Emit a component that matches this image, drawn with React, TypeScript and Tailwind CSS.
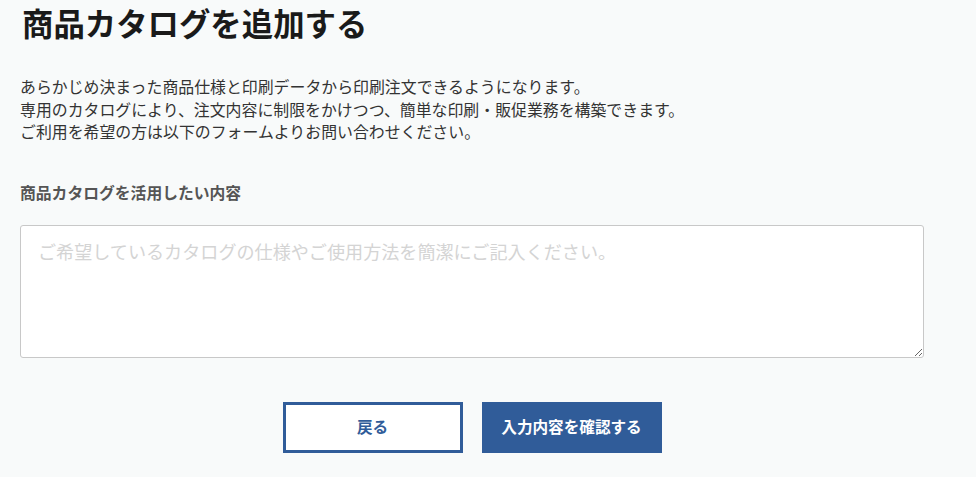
import React from "react";

const App: React.FC = () => {
  return (
    <div
      className="min-h-[477px] bg-[#f8fafa] text-[#333]"
      style={{ fontFamily: '"Noto Sans CJK JP", "Noto Sans", sans-serif' }}
    >
      <div className="w-[904px] ml-5 pt-[3px]">
        <h1 className="ml-[2px] text-[31.4px] leading-[40px] font-bold text-[#1a1a1a]">
          商品カタログを追加する
        </h1>

        <div className="mt-[33px] text-[15.9px] leading-[22.5px] text-[#333]">
          <p>あらかじめ決まった商品仕様と印刷データから印刷注文できるようになります。</p>
          <p>専用のカタログにより、注文内容に制限をかけつつ、簡単な印刷・販促業務を構築できます。</p>
          <p>ご利用を希望の方は以下のフォームよりお問い合わせください。</p>
        </div>

        <label className="block mt-[38px] text-[15.8px] leading-[22px] font-bold text-[#555]">
          商品カタログを活用したい内容
        </label>

        <textarea
          className="block mt-[21px] w-full h-[133px] bg-white border border-[#c8c8c8] rounded-[3px] px-[17px] py-[11px] text-[18.1px] leading-[28px] placeholder:text-[#d4d4d4] outline-none"
          placeholder="ご希望しているカタログの仕様やご使用方法を簡潔にご記入ください。"
        />

        <div className="flex justify-center gap-[19px] mt-[44px]">
          <button className="w-[180px] h-[51px] border-[3px] border-[#305c99] bg-white text-[#305c99] text-[15.6px] font-bold">
            戻る
          </button>
          <button className="w-[180px] h-[51px] bg-[#305c99] text-white text-[15.6px] font-bold">
            入力内容を確認する
          </button>
        </div>
      </div>
    </div>
  );
};

export default App;
